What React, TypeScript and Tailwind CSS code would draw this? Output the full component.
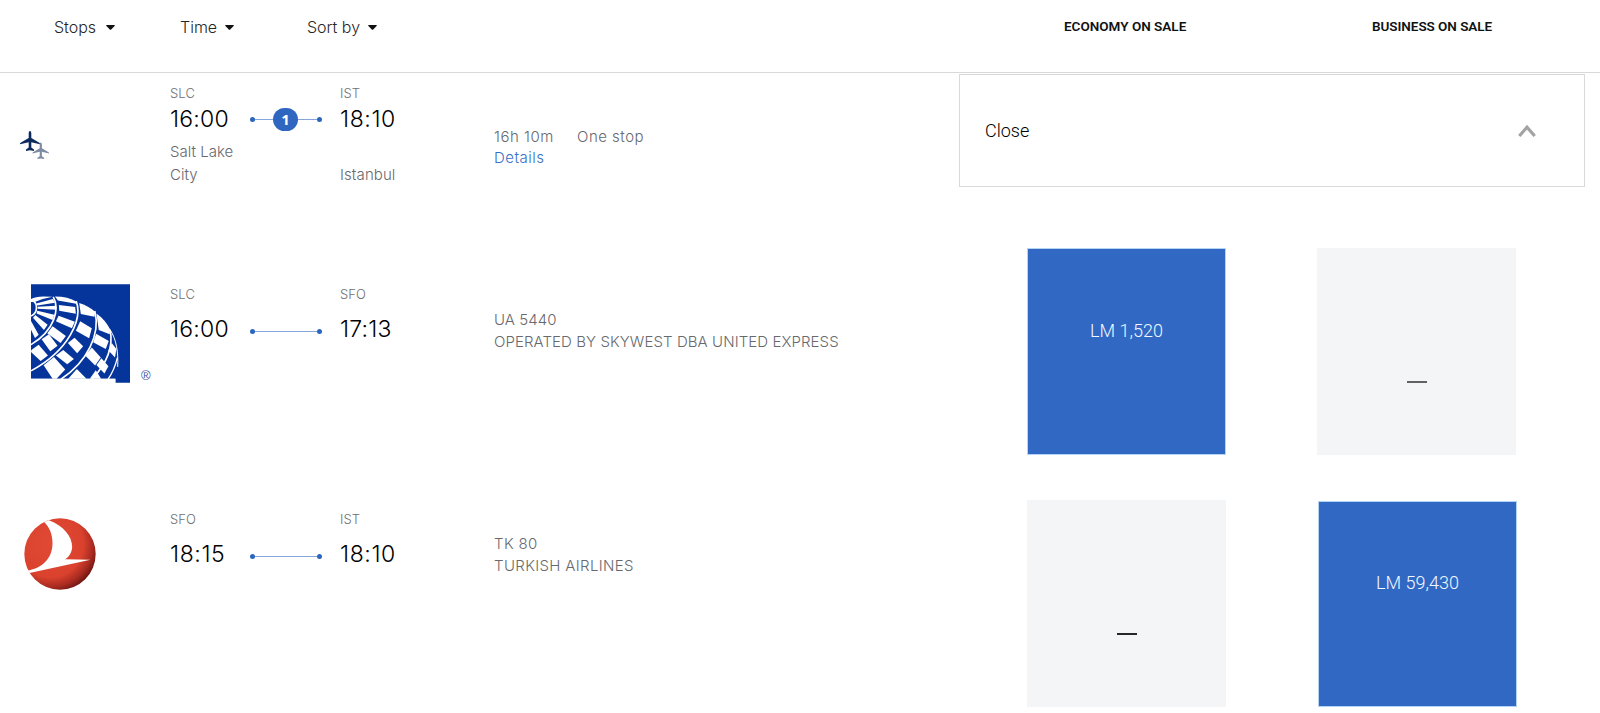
import type { ReactNode } from "react";

function Caret() {
  return (
    <svg className="mt-px h-[5px] w-[9px]" viewBox="0 0 9 5">
      <path d="M.2.8Q0 .1.8 0H8.2Q9 .1 8.8.8L5.2 4.6Q4.500 5.100 3.800 4.600Z" fill="#111" />
    </svg>
  );
}

function Filter({ label, className }: { label: string; className: string }) {
  return (
    <button className={`flex items-center justify-between font-[Inter,sans-serif] text-base leading-6 text-[#262626] ${className}`}>
      {label}
      <Caret />
    </button>
  );
}

const PLANE =
  "M10 0C10.900 0 11.300 1.400 11.300 2.600V7L19.400 11.700Q20 12.100 20 13.200L11.300 11.200V16.600L14 18.500V20L10 19.200L6 20V18.500L8.700 16.600V11.200L0 13.200Q0 12.100.6 11.700L8.700 7V2.600C8.700 1.400 9.100 0 10 0Z";

function Planes() {
  return (
    <svg className="h-[29px] w-[30px]" viewBox="0 0 30 29">
      <path d={PLANE} fill="#0c2a5c" />
      <path d={PLANE} fill="#7e8ba3" transform="translate(12.500 11.500) scale(.83)" />
    </svg>
  );
}

function UnitedLogo() {
  return (
    <div className="flex items-end">
      <svg className="h-[99px] w-[99px]" viewBox="93 41 298 297">
        <path d="M93 41H391V338H347V326H93Z" fill="#05349b" />
        <g fill="#fff">
          <path d="M93 86Q106 78 130 78L158 79Q130 84 106 94L93 95Z" />
          <path d="M109 99L159 86L165 97L112 105Z" />
          <path d="M113 109L168 106L169 118L113 115Z" />
          <path d="M112 121L163 133L158 149L110 129Z" />
          <path d="M106 134L143 163L132 179L99 142Z" />
          <path d="M93 152L116 193L105 203L93 178Z" />
          <path d="M165 78Q205 78 230 94L229 100L174 90Z" />
          <path d="M177 104L226 110L228 130L178 121Z" />
          <path d="M176 136L225 154L216 174L168 153Z" />
          <path d="M158 168L198 197L182 218L142 189Z" />
          <path d="M125 207L147 192L173 226L151 243Z" />
          <path d="M94 239L116 223L144 256L122 272L93 245Z" />
          <path d="M238 98Q264 106 286 124L284 139L243 131Z" />
          <path d="M241 153L276 174L268 204L228 181Z" />
          <path d="M204 218L224 202L250 228L232 249Z" />
          <path d="M168 256L190 239L222 266L202 282Z" />
          <path d="M131 285L162 260L196 298L170 326H158Z" />
          <path d="M290 129Q317 148 331 177L330 192L297 179Z" />
          <path d="M289 190L327 212L318 236L280 216Z" />
          <path d="M256 256L276 232L303 262L286 286Z" />
          <path d="M205 326L231 296L260 326Z" />
          <path d="M336 218L350 236L346 262L326 241Z" />
          <path d="M305 264L326 288L314 310L290 284Z" />
          <path d="M270 326L288 300L304 326Z" />
        </g>
        <g fill="none" stroke="#fff" strokeWidth="5">
          <path d="M93 89C115 94 115 127 93 137" />
          <path d="M160 79C180 115 165 180 93 223" />
          <path d="M229 92C249 145 208 240 93 302" />
          <path d="M285 122C303 190 263 275 183 327" />
          <path d="M331 178C343 235 319 282 277 327" />
          <path d="M331 178C350 207 356 245 354 290" strokeWidth="3" />
          <path d="M353 262C347 288 338 308 325 327" strokeWidth="4" />
        </g>
        <path d="M93 326H347V338H93Z" fill="#fff" />
      </svg>
      <span className="mb-px ml-[11px] font-['Liberation_Sans'] text-[13px] leading-[13px] text-[#3450a5]">®</span>
    </div>
  );
}

function TurkishLogo() {
  return (
    <svg className="h-[72px] w-[72px]" viewBox="72 53 215 216">
      <defs>
        <radialGradient id="tk" cx=".36" cy=".36" r=".72">
          <stop offset="0" stopColor="#e04a35" />
          <stop offset=".65" stopColor="#da422e" />
          <stop offset=".84" stopColor="#a82a20" />
          <stop offset="1" stopColor="#5c120f" />
        </radialGradient>
      </defs>
      <circle cx="179.500" cy="161" r="107" fill="url(#tk)" />
      <path
        d="M132 65L146 60C190 77 216 108 216 140C215 157 206 170 195 177L271 178L88 218L83 211C125 203 157 176 157 128C157 104 149 82 132 65Z"
        fill="#fff"
      />
    </svg>
  );
}

function Route({ stops }: { stops?: number }) {
  return (
    <div className="-ml-px flex w-[72px] items-center">
      <span className="size-[5px] rounded-full bg-[#2b66bd]" />
      <span className={stops === undefined ? "h-px grow bg-[#86a5dc]" : "h-px w-[18px] bg-[#86a5dc]"} />
      {stops !== undefined && (
        <>
          <span className="flex h-[23px] w-[25px] items-center justify-center rounded-full bg-[#2f66c0] font-['Noto_Sans'] text-[15px] font-bold text-white">
            {stops}
          </span>
          <span className="h-px grow bg-[#86a5dc]" />
        </>
      )}
      <span className="size-[5px] rounded-full bg-[#2b66bd]" />
    </div>
  );
}

function Airport({ children }: { children: ReactNode }) {
  return <div className="font-[Inter,sans-serif] text-[13px] leading-4 tracking-[0.1px] text-[#707070]">{children}</div>;
}

function Clock({ children }: { children: string }) {
  const tracking = children.startsWith("18") ? "tracking-[0.6px]" : "tracking-[0.2px]";
  return <div className={`font-[Inter,sans-serif] text-[23px] leading-6 text-black ${tracking}`}>{children}</div>;
}

function Leg({ from, to, depart, arrive }: { from: string; to: string; depart: string; arrive: string }) {
  return (
    <div className="grid w-[324px] grid-cols-[81px_89px_154px] gap-y-[15px]">
      <Airport>{from}</Airport>
      <span />
      <Airport>{to}</Airport>
      <Clock>{depart}</Clock>
      <div className="flex pt-[5px]">
        <Route />
      </div>
      <Clock>{arrive}</Clock>
    </div>
  );
}

function Fare({ price, className }: { price: string; className: string }) {
  return (
    <div className={`flex w-[199px] justify-center border border-[#b5d3f2] bg-[#3068c4] text-lg leading-6 text-[#f2f8ff] ${className}`}>
      {price}
    </div>
  );
}

function NoFare({ className }: { className: string }) {
  return (
    <div className="flex h-[207px] w-[199px] justify-center bg-[#f3f5f6] pt-[133px]">
      <span className={`h-[2px] w-5 ${className}`} />
    </div>
  );
}

export default function App() {
  return (
    <div className="h-[713px] w-[1600px] overflow-hidden bg-white font-[Roboto,sans-serif] font-light">
      <header className="flex h-[73px] items-start border-b border-[#d9d9d9] pt-[15px]">
        <Filter label="Stops" className="ml-[54px] w-[61px]" />
        <Filter label="Time" className="ml-[65px] w-[54px]" />
        <Filter label="Sort by" className="ml-[73px] w-[70px]" />
        <div className="ml-[687px] w-[124px] text-[13.500px] leading-[23px] font-semibold whitespace-nowrap text-[#111]">ECONOMY ON SALE</div>
        <div className="ml-[184px] w-[124px] text-[13.500px] leading-[23px] font-semibold tracking-[-0.05px] whitespace-nowrap text-[#111]">BUSINESS ON SALE</div>
      </header>

      <section className="flex h-[175px] items-start">
        <div className="w-[170px] pt-[58px] pl-5">
          <Planes />
        </div>
        <div className="w-[81px] pt-3">
          <Airport>SLC</Airport>
          <div className="pt-[6px]">
            <Clock>16:00</Clock>
          </div>
          <div className="w-[70px] pt-[9px] font-[Inter,sans-serif] text-[15px] leading-[23px] text-[#66696d]">Salt Lake City</div>
        </div>
        <div className="w-[89px] pt-[35px]">
          <Route stops={1} />
        </div>
        <div className="w-[154px] pt-3">
          <Airport>IST</Airport>
          <div className="pt-[6px]">
            <Clock>18:10</Clock>
          </div>
          <div className="pt-[32px] font-[Inter,sans-serif] text-[15px] leading-[23px] tracking-[0.1px] text-[#66696d]">Istanbul</div>
        </div>
        <div className="w-[465px] pt-[53px] font-[Inter,sans-serif] text-[15px] leading-[21px] tracking-[0.5px] text-[#66696d]">
          <div className="flex gap-[23px]">
            <span className="w-[60px]">16h 10m</span>
            <span>One stop</span>
          </div>
          <a className="text-[#3a6fc6]">Details</a>
        </div>
        <div className="mt-px flex h-[113px] w-[626px] items-center justify-between border border-[#d9d9d9] pr-[48px] pl-[25px]">
          <span className="text-lg text-black">Close</span>
          <svg className="h-[14px] w-[18px]" viewBox="0 0 18 14" fill="none" stroke="#a3a3a3" strokeWidth="3.200">
            <path d="M1.300 12L9 3.200L16.700 12" />
          </svg>
        </div>
      </section>

      <section className="flex h-[252px] items-start">
        <div className="w-[170px] pt-9 pl-[31px]">
          <UnitedLogo />
        </div>
        <div className="pt-[38px]">
          <Leg from="SLC" to="SFO" depart="16:00" arrive="17:13" />
        </div>
        <div className="w-[533px] pt-[61px] font-[Inter,sans-serif] text-[15px] leading-[21.500px] tracking-[0.08px] text-[#66696d]">
          <div>UA 5440</div>
          <div>OPERATED BY SKYWEST DBA UNITED EXPRESS</div>
        </div>
        <div className="flex items-start gap-[91px]">
          <Fare price="LM 1,520" className="h-[207px] pt-[70px]" />
          <NoFare className="bg-[#606266]" />
        </div>
      </section>

      <section className="flex items-start">
        <div className="w-[170px] pt-[18px] pl-6">
          <TurkishLogo />
        </div>
        <div className="pt-[11px]">
          <Leg from="SFO" to="IST" depart="18:15" arrive="18:10" />
        </div>
        <div className="w-[533px] pt-[33px] font-[Inter,sans-serif] text-[15px] leading-[21.500px] tracking-[0.35px] text-[#66696d]">
          <div>TK 80</div>
          <div>TURKISH AIRLINES</div>
        </div>
        <div className="flex items-start gap-[92px]">
          <NoFare className="bg-[#26272a]" />
          <Fare price="LM 59,430" className="mt-px h-[206px] pt-[69px]" />
        </div>
      </section>
    </div>
  );
}
